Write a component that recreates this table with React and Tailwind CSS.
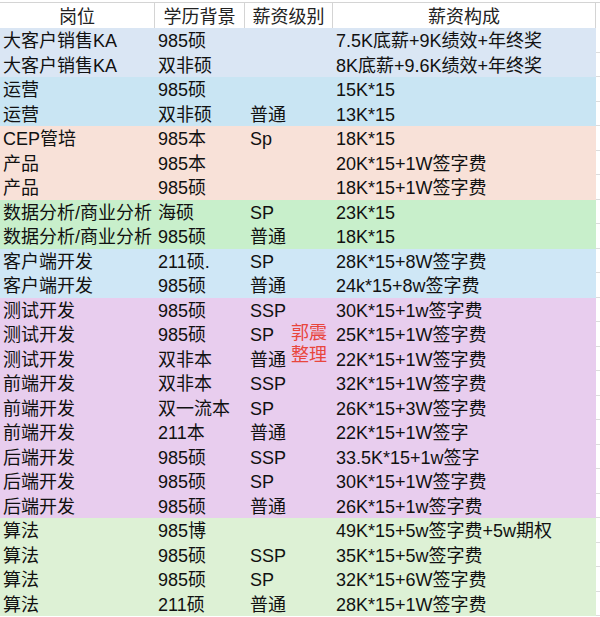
import React from "react";

const groups = [
  {
    bg: "bg-[#dae6f4]",
    rows: [
      ["大客户销售KA", "985硕", "", "7.5K底薪+9K绩效+年终奖"],
      ["大客户销售KA", "双非硕", "", "8K底薪+9.6K绩效+年终奖"],
    ],
  },
  {
    bg: "bg-[#c9e5f3]",
    rows: [
      ["运营", "985硕", "", "15K*15"],
      ["运营", "双非硕", "普通", "13K*15"],
    ],
  },
  {
    bg: "bg-[#f8e1d8]",
    rows: [
      ["CEP管培", "985本", "Sp", "18K*15"],
      ["产品", "985本", "", "20K*15+1W签字费"],
      ["产品", "985硕", "", "18K*15+1W签字费"],
    ],
  },
  {
    bg: "bg-[#c8efcb]",
    rows: [
      ["数据分析/商业分析", "海硕", "SP", "23K*15"],
      ["数据分析/商业分析", "985硕", "普通", "18K*15"],
    ],
  },
  {
    bg: "bg-[#cfe7f6]",
    rows: [
      ["客户端开发", "211硕.", "SP", "28K*15+8W签字费"],
      ["客户端开发", "985硕", "普通", "24k*15+8w签字费"],
    ],
  },
  {
    bg: "bg-[#e8cdee]",
    rows: [
      ["测试开发", "985硕", "SSP", "30K*15+1w签字费"],
      ["测试开发", "985硕", "SP", "25K*15+1W签字费"],
      ["测试开发", "双非本", "普通", "22K*15+1W签字费"],
      ["前端开发", "双非本", "SSP", "32K*15+1W签字费"],
      ["前端开发", "双一流本", "SP", "26K*15+3W签字费"],
      ["前端开发", "211本", "普通", "22K*15+1W签字"],
      ["后端开发", "985硕", "SSP", "33.5K*15+1w签字"],
      ["后端开发", "985硕", "SP", "30K*15+1W签字费"],
      ["后端开发", "985硕", "普通", "26K*15+1w签字费"],
    ],
  },
  {
    bg: "bg-[#ddf1d5]",
    rows: [
      ["算法", "985博", "", "49K*15+5w签字费+5w期权"],
      ["算法", "985硕", "SSP", "35K*15+5w签字费"],
      ["算法", "985硕", "SP", "32K*15+6W签字费"],
      ["算法", "211硕", "普通", "28K*15+1W签字费"],
    ],
  },
];

const cols = "grid grid-cols-[155px_90px_88px_263px_4px]";

export default function App() {
  return (
    <div
      className="relative w-[600px] h-[617px] overflow-hidden bg-white text-[18px] text-[#111] leading-none"
      style={{ fontFamily: '"Liberation Sans", "Noto Sans CJK SC", sans-serif' }}
    >
      {/* top strip */}
      <div className="h-[3px] border-b border-[#d4d4d4]" />

      {/* header */}
      <div className={`${cols} h-[25px] text-[#222]`}>
        <div className="flex items-center justify-center pt-[2px] border-r border-[#d4d4d4]">岗位</div>
        <div className="flex items-center justify-center pt-[2px] border-r border-[#d4d4d4]">学历背景</div>
        <div className="flex items-center justify-center pt-[2px] border-r border-[#d4d4d4]">薪资级别</div>
        <div className="flex items-center justify-center pt-[2px] border-r border-[#d4d4d4]">薪资构成</div>
        <div />
      </div>

      {/* body */}
      {groups.map((g, gi) => (
        <div key={gi}>
          {g.rows.map((r, ri) => (
            <div key={ri} className={`${cols} h-[24.5px]`}>
              <div className={`${g.bg} flex items-center pl-[3px] pt-[2px] whitespace-nowrap`}>{r[0]}</div>
              <div className={`${g.bg} flex items-center pl-[3px] pt-[2px] whitespace-nowrap`}>{r[1]}</div>
              <div className={`${g.bg} flex items-center pl-[5px] pt-[2px] whitespace-nowrap`}>{r[2]}</div>
              <div className={`${g.bg} flex items-center pl-[3px] pt-[2px] whitespace-nowrap`}>{r[3]}</div>
              <div className="border-b border-[#dcdcdc]" />
            </div>
          ))}
        </div>
      ))}

      {/* watermark note */}
      <div className="absolute left-[291px] top-[322px] text-[#e8463d] text-[18px] leading-[22px]">
        <div>郭震</div>
        <div>整理</div>
      </div>
    </div>
  );
}
